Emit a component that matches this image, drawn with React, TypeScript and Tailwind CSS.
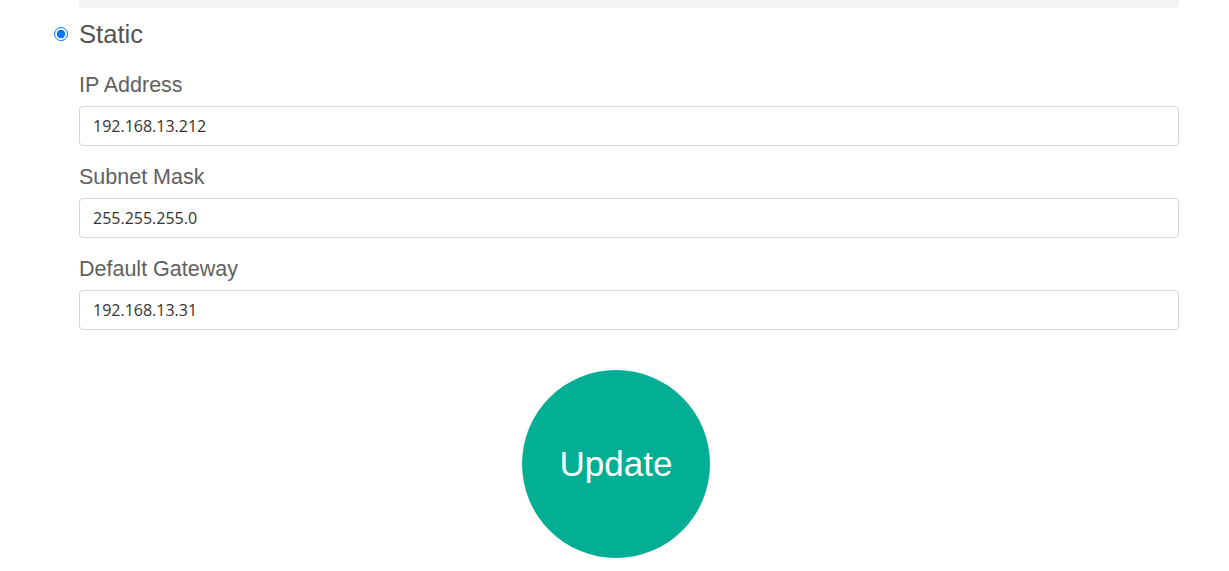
import React from "react";

const Field = ({ label, value }: { label: string; value: string }) => (
  <div className="flex flex-col">
    <label className="text-[21.5px] leading-[26px] text-[#616161] mb-[8px]">{label}</label>
    <div className="h-[40px] w-full rounded-[4px] border border-[#d6d6d6] bg-white flex items-center pl-[13px] text-[16px] text-[#333] font-['Open_Sans',sans-serif]">
      {value}
    </div>
  </div>
);

export default function App() {
  return (
    <div className="w-[1229px] h-[571px] bg-white overflow-hidden font-['Liberation_Sans',Arial,sans-serif]">
      <div className="ml-[79px] w-[1100px] h-[8px] bg-[#f3f3f3] rounded-b-[4px]" />
      <div className="flex items-center mt-[12px] h-[28px]">
        <input
          type="radio"
          checked
          readOnly
          className="ml-[54px] w-[14px] h-[14px] m-0 accent-[#0075ff]"
        />
        <span className="ml-[11px] text-[25.6px] leading-[28px] text-[#555]">Static</span>
      </div>
      <div className="pl-[79px] pr-[50px] mt-[24px] flex flex-col gap-[18px]">
        <Field label="IP Address" value="192.168.13.212" />
        <Field label="Subnet Mask" value="255.255.255.0" />
        <Field label="Default Gateway" value="192.168.13.31" />
      </div>
      <div className="flex justify-center pl-[3px] mt-[40px]">
        <button className="w-[188px] h-[188px] rounded-full bg-[#02ae94] text-white text-[35px] flex items-center justify-center">
          Update
        </button>
      </div>
    </div>
  );
}
